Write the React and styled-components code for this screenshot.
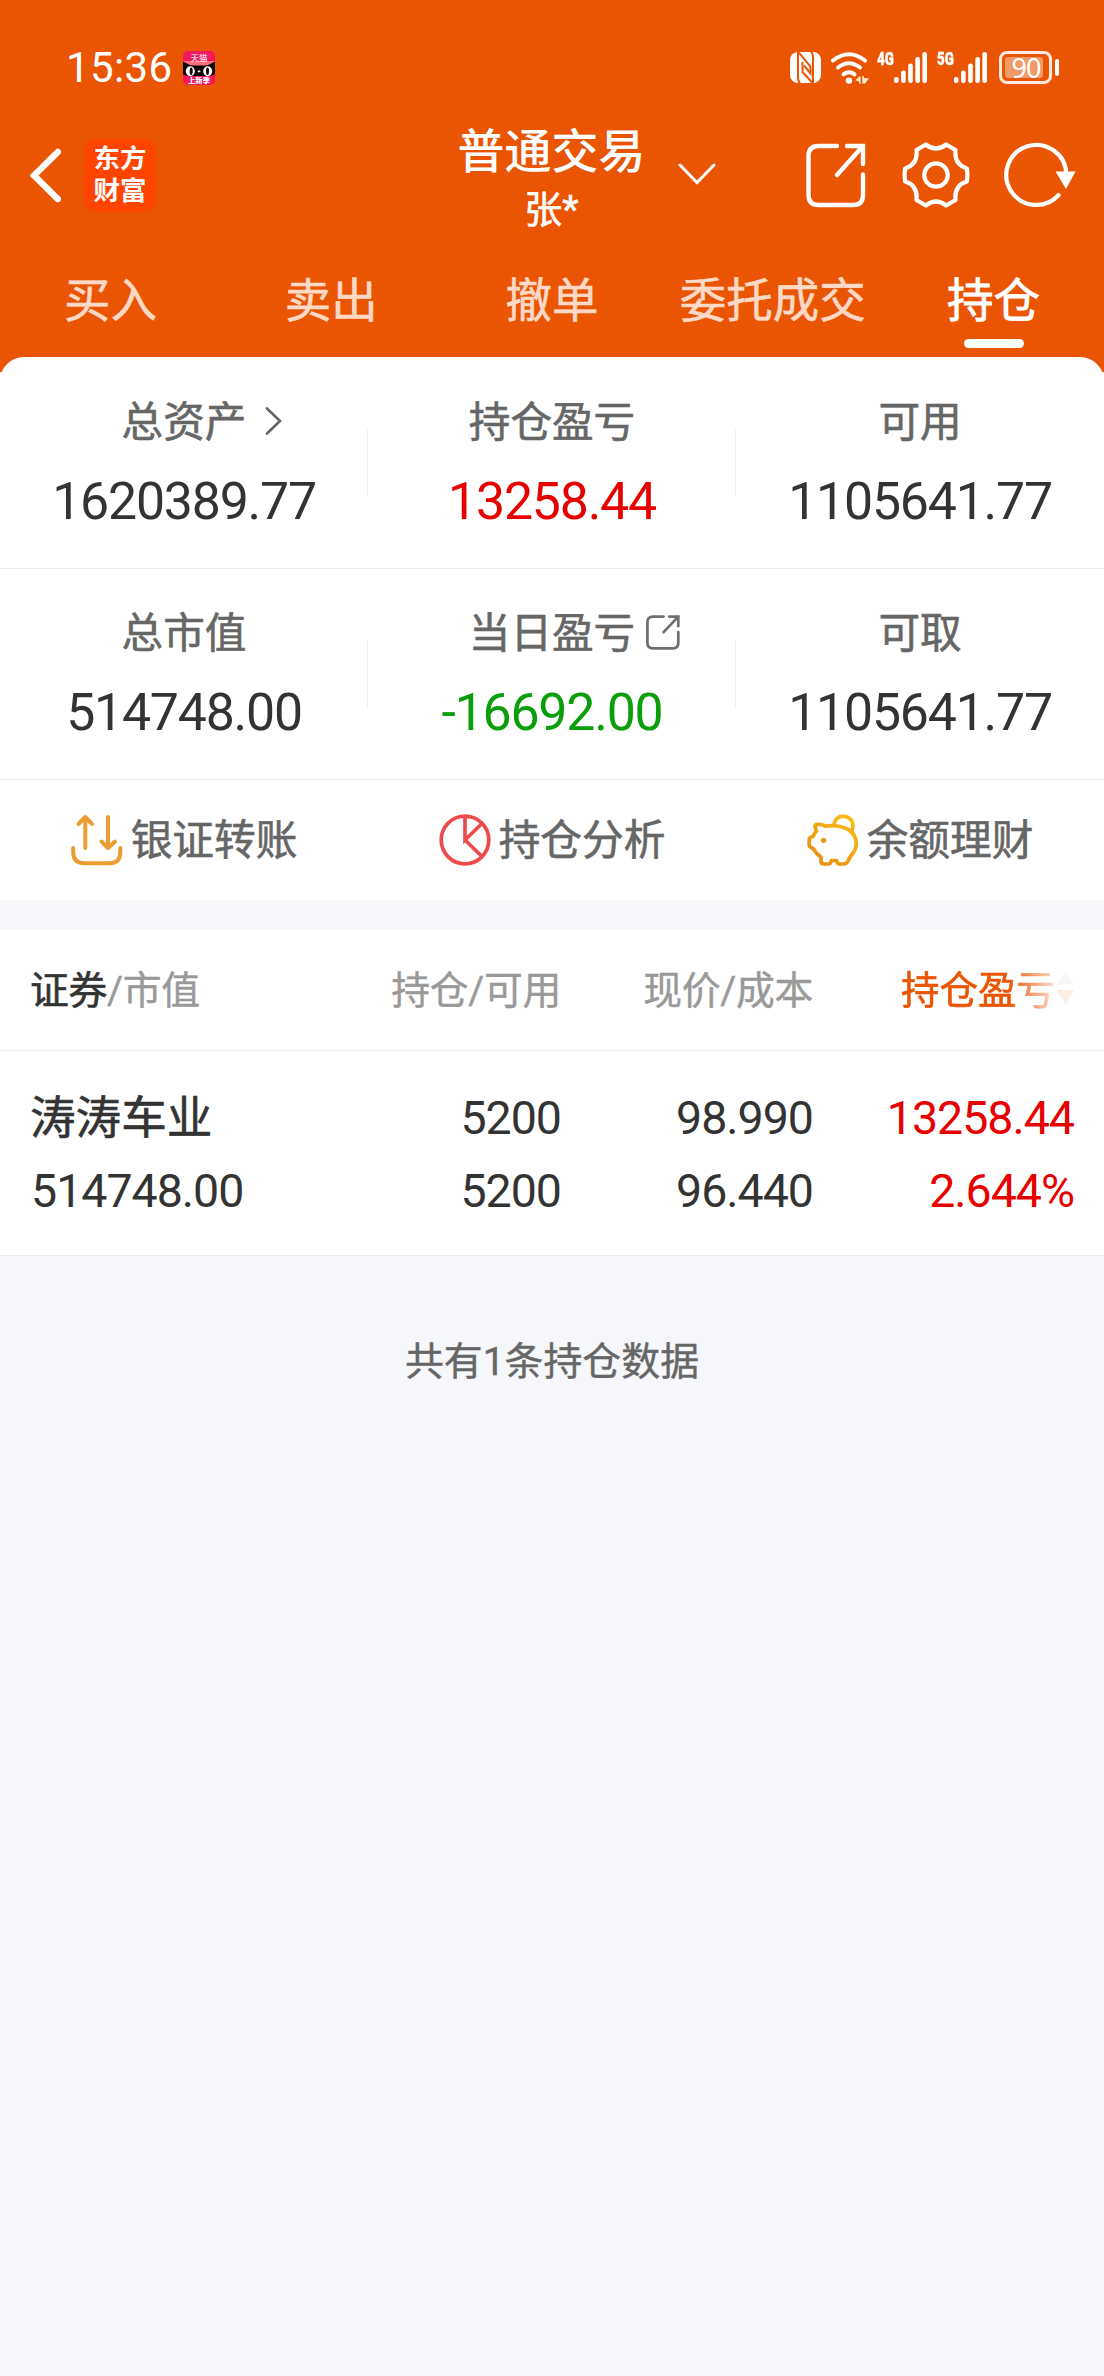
import React from "react";
import styled, { createGlobalStyle } from "styled-components";

const ORANGE = "#ea5504";
const INK = "#333333";
const RED = "#e60000";
const GREEN = "#0a9e0a";
const LINE = "#ededed";
const PAGE = "#f6f7fa";

const GlobalStyle = createGlobalStyle`
  * { box-sizing: border-box; }
  body {
    margin: 0;
    background: ${PAGE};
    font-family: Roboto, "Noto Sans CJK SC", sans-serif;
    color: ${INK};
    -webkit-font-smoothing: antialiased;
  }
  svg { display: block; flex: none; }
`;

const Screen = styled.div`
  width: 1104px;
  min-height: 2376px;
  background: ${PAGE};
`;

const Header = styled.header`
  background: ${ORANGE};
  height: 357px;
  color: #fff;
`;

const StatusBar = styled.div`
  height: 118px;
  padding: 17px 45px 0 66px;
  display: flex;
  align-items: center;
`;

const Clock = styled.span`
  font-size: 42px;
  line-height: 48px;
  letter-spacing: 0.4px;
  margin-right: 10px;
`;

const StatusIcons = styled.div`
  margin-left: auto;
  display: flex;
  align-items: center;
  height: 34px;
`;

const Signal = styled.div`
  display: flex;
  align-items: flex-start;
  height: 31px;
  margin-left: ${(p) => p.$gap}px;
`;

const Generation = styled.span`
  width: 17px;
  font: 900 19px/14px Roboto, sans-serif;
  white-space: nowrap;
`;

const GenerationText = styled.span`
  display: inline-block;
  transform: scaleX(0.7);
  transform-origin: 0 0;
  -webkit-text-stroke: 0.4px currentColor;
`;

const Battery = styled.div`
  display: flex;
  align-items: center;
  gap: 3px;
  margin-left: 11px;
`;

const BatteryBody = styled.div`
  width: 53px;
  height: 33px;
  padding: 3px;
  border: 3px solid #ffe9dc;
  border-radius: 8px;
  display: flex;
`;

const BatteryLevel = styled.div`
  width: 38px;
  border-radius: 3px;
  background: rgba(255, 255, 255, 0.4);
  font: 400 27px/22px "Noto Sans", sans-serif;
  letter-spacing: -1px;
  text-align: center;
  padding-left: 4px;
  white-space: nowrap;
`;

const BatteryTip = styled.div`
  width: 4px;
  height: 17px;
  border-radius: 2px;
  background: #fff;
`;

const TitleBar = styled.div`
  height: 118px;
  padding: 0 28px 0 30px;
  display: grid;
  grid-template-columns: 1fr auto 1fr;
  align-items: start;
`;

const TitleLeft = styled.div`
  display: flex;
  align-items: center;
  gap: 23px;
  padding-top: 21px;
`;

const Brand = styled.div`
  width: 72px;
  height: 73px;
  border-radius: 14px;
  background: #ff4400;
  padding-top: 4px;
  text-align: center;
  font: 700 26.5px/32px "Liberation Sans", "Noto Sans CJK SC", sans-serif;
`;

const TitleCenter = styled.div`
  display: flex;
  align-items: center;
  padding-top: 4px;
`;

const TitleText = styled.div`
  margin: 0 1px 0 -3px;
  text-align: center;
`;

const TitleMain = styled.div`
  font-size: 47px;
  font-weight: 500;
  line-height: 60px;
`;

const TitleSub = styled.div`
  font-size: 38px;
  font-weight: 400;
  line-height: 56px;
  -webkit-text-stroke: 0.6px currentColor;
`;

const ChevronSlot = styled.div`
  margin: -12px -70px 0 31px;
`;

const TitleRight = styled.div`
  display: flex;
  justify-content: flex-end;
  align-items: center;
  padding-top: 24px;
`;

const IconSlot = styled.div`
  margin-left: ${(p) => p.$gap || 0}px;
`;

const Tabs = styled.nav`
  display: grid;
  grid-template-columns: repeat(5, 1fr);
  height: 121px;
`;

const Tab = styled.div`
  display: flex;
  flex-direction: column;
  align-items: center;
  padding-top: 35px;
  font-size: 46.5px;
  line-height: 60px;
  -webkit-text-stroke: ${(p) => (p.$active ? 0.8 : 0.6)}px currentColor;
  color: ${(p) => (p.$active ? "#fff" : "#ffd9c6")};
`;

const TabBar = styled.div`
  width: 60px;
  height: 9px;
  margin-top: 8px;
  border-radius: 5px;
  background: #fff;
`;

const SheetBack = styled.div`
  background: linear-gradient(${ORANGE} 15px, #fff 15px);
`;

const Sheet = styled.section`
  background: #fff;
  border-radius: 24px 24px 0 0;
`;

const StatRow = styled.div`
  display: grid;
  grid-template-columns: repeat(3, 1fr);
  height: ${(p) => p.$height}px;
  padding-top: ${(p) => p.$top}px;
  border-bottom: 1px solid ${LINE};
`;

const Stat = styled.div`
  display: flex;
  flex-direction: column;
  align-items: center;
  background: ${(p) =>
    p.$divided ? `linear-gradient(${LINE}, ${LINE}) 100% 31px / 1px 66px no-repeat` : "none"};
`;

const StatLabel = styled.div`
  display: flex;
  align-items: center;
  height: 48px;
  font-size: 41.6px;
  line-height: 48px;
  color: #666;
  white-space: nowrap;
  -webkit-text-stroke: 0.6px currentColor;
`;

const LabelIcon = styled.span`
  margin-top: -4px;
  margin-left: ${(p) => p.$gap}px;
  margin-right: ${(p) => -p.$gap - p.$width}px;
`;

const StatValue = styled.div`
  margin-top: 25px;
  font-size: 51.8px;
  line-height: 60px;
  letter-spacing: -1.2px;
  color: ${(p) => p.$color || INK};
`;

const Actions = styled.div`
  display: grid;
  grid-template-columns: repeat(3, 1fr);
  height: 120px;
`;

const Action = styled.div`
  display: flex;
  align-items: center;
  justify-content: center;
  gap: 8px;
  color: #666;
`;

const ActionLabel = styled.span`
  padding-top: 2px;
  font-size: 41.7px;
  line-height: 48px;
  -webkit-text-stroke: 0.6px currentColor;
`;

const Holdings = styled.section`
  margin-top: 30px;
  background: #fff;
`;

const HoldingRow = styled.div`
  display: grid;
  grid-template-columns: 282px 250px 252px 261px;
  padding: 0 30px 0 29px;
  border-bottom: 1px solid ${LINE};
`;

const HeadCell = styled.div`
  height: 120px;
  padding: 0 0 7px ${(p) => (p.$left ? 1 : 0)}px;
  display: flex;
  align-items: center;
  justify-content: ${(p) => (p.$left ? "flex-start" : "flex-end")};
  font-size: 38.8px;
  letter-spacing: -0.3px;
  color: ${(p) => p.$color || "#999"};
  white-space: nowrap;
  -webkit-text-stroke: 0.4px currentColor;
`;

const Strong = styled.span`
  color: ${INK};
  -webkit-text-stroke: 0.6px currentColor;
`;

const Faded = styled.div`
  display: flex;
  align-items: center;
  gap: 2px;
  font-size: 38.5px;
  letter-spacing: 0;
  -webkit-text-stroke: 0.6px currentColor;
  mask-image: linear-gradient(90deg, #000 62%, rgba(0, 0, 0, 0.28) 86%, rgba(0, 0, 0, 0.1) 93%);
`;

const Cell = styled.div`
  height: 204px;
  padding-top: 31px;
  text-align: ${(p) => (p.$left ? "left" : "right")};
  font-size: 46.5px;
  line-height: 73px;
  letter-spacing: -1px;
  color: ${(p) => p.$color || INK};
`;

const CellLine = styled.div`
  height: 73px;
  padding-left: 2px;
  white-space: nowrap;
`;

const StockName = styled(CellLine)`
  padding: 0 0 0 1px;
  font-size: 45.6px;
  letter-spacing: 0;
  -webkit-text-stroke: 0.6px currentColor;
`;

const Footer = styled.div`
  padding-top: 77px;
  text-align: center;
  font-size: 38.9px;
  line-height: 58px;
  color: #666;
  -webkit-text-stroke: 0.4px currentColor;
`;

function CatAppIcon() {
  return (
    <svg width="32" height="34" viewBox="0 0 32 34">
      <rect width="32" height="34" rx="5" fill="#f5175c" />
      <rect y="10" width="32" height="6" fill="#ff6f78" />
      <path d="M0 10.5 L4 12.5 Q7 14.5 10 14.5 H22 Q25 14.5 28 12.5 L32 10.5 V23 Q30 25 26 25 H6 Q2 25 0 23Z" fill="#0b0508" />
      <ellipse cx="7.3" cy="20.2" rx="4.5" ry="5" fill="#fff" />
      <ellipse cx="24.7" cy="20.2" rx="4.5" ry="5" fill="#fff" />
      <ellipse cx="8.2" cy="20.2" rx="1.5" ry="3.7" fill="#0b0508" />
      <ellipse cx="24.5" cy="20.2" rx="1.5" ry="3.7" fill="#0b0508" />
      <rect x="14.6" y="19.6" width="2.8" height="1.6" rx="0.8" fill="#fff" />
      <text x="16" y="9.8" textAnchor="middle" fontSize="8.5" fontWeight="500" fill="#ffd7e2">天猫</text>
      <text x="16" y="32.3" textAnchor="middle" fontSize="7.3" fontWeight="900" fill="#fff">上新季</text>
    </svg>
  );
}

function NfcIcon() {
  return (
    <svg width="31" height="31" viewBox="0 0 31 31">
      <rect width="31" height="31" rx="8" fill="#fff" />
      <g fill="none" stroke={ORANGE} strokeWidth="2">
        <path d="M7.5 -1 L20.5 14.5 V21.5 L14 13.5" />
        <path d="M8 0 V25 Q8 29.5 10 31.5" />
        <path d="M23.5 32 L12.5 20 V10" />
        <path d="M23 31 V6 Q23 1.5 21 -0.5" />
      </g>
    </svg>
  );
}

function WifiIcon() {
  return (
    <svg width="38" height="32" viewBox="0 0 38 32">
      <g fill="none" stroke="#fff" strokeWidth="4" strokeLinecap="round">
        <path d="M2 8.5 Q18 -4 34 8.5" />
        <path d="M7 15.5 Q18 7 29 15.5" />
        <path d="M12.5 22.3 Q18 18.3 23.5 22.3" />
      </g>
      <circle cx="18" cy="28.6" r="3.2" fill="#fff" />
      <path d="M24.5 28.3 L28 24.5 H29.6 V32 H28.4 V29.8Z M31.2 24 H32.6 L33 26 L38 26.5 L34 31.5 H31.2Z" fill="#ffe9c9" />
    </svg>
  );
}

function SignalBars() {
  const heights = [6, 12.5, 19.5, 26, 31];
  return (
    <svg width="34" height="31" viewBox="0 0 34 31">
      {heights.map((h, i) => (
        <rect key={h} x={i * 7.1} y={31 - h} width="4.6" height={h} rx="2.1" fill="#fff" />
      ))}
    </svg>
  );
}

function BackIcon() {
  return (
    <svg width="31" height="56" viewBox="0 0 31 56" fill="none" stroke="#fff" strokeWidth="6.5">
      <path d="M27.8 4 L4 27.5 L27.8 51" strokeLinecap="round" />
    </svg>
  );
}

function ChevronDown() {
  return (
    <svg width="38" height="22" viewBox="0 0 38 22" fill="none" stroke="#fff" strokeWidth="3">
      <path d="M2 2 L19 19.5 L36 2" strokeLinecap="round" />
    </svg>
  );
}

function ChevronRight() {
  return (
    <svg width="17" height="28" viewBox="0 0 17 28" fill="none" stroke="#666" strokeWidth="2.6">
      <path d="M2 1.5 L15 14 L2 26.5" strokeLinecap="round" />
    </svg>
  );
}

function ShareIcon({ width, height, color, stroke }) {
  return (
    <svg width={width} height={height} viewBox="0 0 60 65" preserveAspectRatio="none" fill="none" stroke={color} strokeWidth={stroke} strokeLinecap="round">
      <path d="M31 3 H12.5 Q2.5 3 2.5 13 V52 Q2.5 62 12.5 62 H47.5 Q57 62 57 52 V31.5" />
      <path d="M41 3 H57 V21" />
      <path d="M56.5 3.5 L31 32" />
    </svg>
  );
}

function GearIcon() {
  return (
    <svg width="68" height="66" viewBox="0 0 68 66" fill="none" stroke="#fff" strokeWidth="4.2" strokeLinejoin="round">
      <path d="M23.8 2.5 Q34 10.5 44.2 2.5 L53.5 8 Q52 22.5 64.8 26.5 Q66 33 64.8 39.5 Q52 43.5 53.5 58 L44.2 63.5 Q34 55.5 23.8 63.5 L14.5 58 Q16 43.5 3.2 39.5 Q2 33 3.2 26.5 Q16 22.5 14.5 8 Z" />
      <circle cx="34" cy="33" r="11.7" />
    </svg>
  );
}

function RefreshIcon() {
  return (
    <svg width="72" height="66" viewBox="0 0 72 66">
      <path d="M54.6 53 A30 30 0 1 1 62.3 32" fill="none" stroke="#fff" strokeWidth="4.2" strokeLinecap="round" />
      <path d="M51.5 29.5 H71.5 L62 47Z" fill="#fff" />
    </svg>
  );
}

function TransferIcon() {
  return (
    <svg width="52" height="52" viewBox="0 0 52 52" fill="none" stroke="#eb9c33" strokeWidth="4" strokeLinecap="round" strokeLinejoin="round">
      <path d="M2.2 34 V38 Q2.2 49.2 13 49.2 H39 Q49.3 49.2 49.3 38 V34" />
      <path d="M14.3 34 V3 M7.5 10 L14.3 3 L21 10" />
      <path d="M37 3 V34 M30.5 27.5 L37 34 L44 27.5" />
    </svg>
  );
}

function PieIcon() {
  return (
    <svg width="52" height="52" viewBox="0 0 52 52" fill="none" stroke="#ee4b4b" strokeWidth="3.7">
      <circle cx="26" cy="26" r="23.8" />
      <path d="M26 2 V26 L43 9.5 M26 26 L43 42.5" />
    </svg>
  );
}

function PiggyIcon() {
  return (
    <svg width="52" height="52" viewBox="0 0 52 52" fill="none" stroke="url(#pig)" strokeWidth="3.7" strokeLinejoin="round" strokeLinecap="round">
      <defs>
        <linearGradient id="pig" gradientUnits="userSpaceOnUse" x1="10" y1="50" x2="42" y2="0">
          <stop offset="0" stopColor="#ea8d12" />
          <stop offset="1" stopColor="#f8bd17" />
        </linearGradient>
      </defs>
      <path d="M18.5 12.2 Q15 10 9 10.6 Q7.5 11 8.2 13.5 L9.5 17 Q7 19.5 6.4 22.2 L3.2 23.5 Q2.2 24 2.2 26 V31 Q2.2 32.8 4 33.4 L6.5 34.8 Q9 40 14 43 V47 Q14 50 17 50 H21.5 Q23.5 50 24.5 46.5 H29.5 Q30.5 50 32.5 50 H36.5 Q39.5 50 41 47 L44 41.5 Q49.5 36 49.3 28.5 Q48 17 36 13.2 Q27 10.8 18.5 12.2 Z" />
      <path d="M26.5 11.5 Q28.5 2.5 36 2.2 Q45.5 3 46 12 Q46 15 44.5 17.5" />
      <circle cx="16.5" cy="26.3" r="2.6" fill="#ee9714" stroke="none" />
    </svg>
  );
}

function SortIcon() {
  return (
    <svg width="17" height="36" viewBox="0 0 17 36">
      <path d="M8.5 1 L17 15.5 H0Z" fill="#bbb" />
      <path d="M8.5 35.5 L0 21 H17Z" fill={ORANGE} />
    </svg>
  );
}

const tabs = ["买入", "卖出", "撤单", "委托成交", "持仓"];

const stats = [
  [
    { label: "总资产", value: "1620389.77", gap: 19, width: 17, icon: <ChevronRight /> },
    { label: "持仓盈亏", value: "13258.44", color: RED },
    { label: "可用", value: "1105641.77" },
  ],
  [
    { label: "总市值", value: "514748.00" },
    {
      label: "当日盈亏",
      value: "-16692.00",
      color: GREEN,
      gap: 11,
      width: 34,
      icon: <ShareIcon width={34} height={35} color="#707070" stroke={4.8} />,
    },
    { label: "可取", value: "1105641.77" },
  ],
];

const actions = [
  { label: "银证转账", icon: <TransferIcon /> },
  { label: "持仓分析", icon: <PieIcon /> },
  { label: "余额理财", icon: <PiggyIcon /> },
];

function NetworkSignal({ name, gap }) {
  return (
    <Signal $gap={gap}>
      <Generation>
        <GenerationText>{name}</GenerationText>
      </Generation>
      <SignalBars />
    </Signal>
  );
}

export default function App() {
  return (
    <Screen>
      <GlobalStyle />
      <Header>
        <StatusBar>
          <Clock>15:36</Clock>
          <CatAppIcon />
          <StatusIcons>
            <NfcIcon />
            <IconSlot $gap={10}>
              <WifiIcon />
            </IconSlot>
            <NetworkSignal name="4G" gap={8} />
            <NetworkSignal name="5G" gap={9} />
            <Battery>
              <BatteryBody>
                <BatteryLevel>90</BatteryLevel>
              </BatteryBody>
              <BatteryTip />
            </Battery>
          </StatusIcons>
        </StatusBar>
        <TitleBar>
          <TitleLeft>
            <BackIcon />
            <Brand>
              东方
              <br />
              财富
            </Brand>
          </TitleLeft>
          <TitleCenter>
            <TitleText>
              <TitleMain>普通交易</TitleMain>
              <TitleSub>张*</TitleSub>
            </TitleText>
            <ChevronSlot>
              <ChevronDown />
            </ChevronSlot>
          </TitleCenter>
          <TitleRight>
            <ShareIcon width={60} height={65} color="#fff" stroke={4.4} />
            <IconSlot $gap={36}>
              <GearIcon />
            </IconSlot>
            <IconSlot $gap={34}>
              <RefreshIcon />
            </IconSlot>
          </TitleRight>
        </TitleBar>
        <Tabs>
          {tabs.map((name) => (
            <Tab key={name} $active={name === "持仓"}>
              {name}
              {name === "持仓" && <TabBar />}
            </Tab>
          ))}
        </Tabs>
      </Header>

      <SheetBack>
        <Sheet>
          {stats.map((row, r) => (
            <StatRow key={r} $height={r === 0 ? 212 : 211} $top={r === 0 ? 42 : 41}>
              {row.map((s, i) => (
                <Stat key={s.label} $divided={i < 2}>
                  <StatLabel>
                    {s.label}
                    {s.icon && (
                      <LabelIcon $gap={s.gap} $width={s.width}>
                        {s.icon}
                      </LabelIcon>
                    )}
                  </StatLabel>
                  <StatValue $color={s.color}>{s.value}</StatValue>
                </Stat>
              ))}
            </StatRow>
          ))}
          <Actions>
            {actions.map((a) => (
              <Action key={a.label}>
                {a.icon}
                <ActionLabel>{a.label}</ActionLabel>
              </Action>
            ))}
          </Actions>
        </Sheet>
      </SheetBack>

      <Holdings>
        <HoldingRow>
          <HeadCell $left>
            <Strong>证券</Strong>/市值
          </HeadCell>
          <HeadCell>持仓/可用</HeadCell>
          <HeadCell>现价/成本</HeadCell>
          <HeadCell $color={ORANGE}>
            <Faded>
              持仓盈亏
              <SortIcon />
            </Faded>
          </HeadCell>
        </HoldingRow>
        <HoldingRow>
          <Cell $left>
            <StockName>涛涛车业</StockName>
            <CellLine>514748.00</CellLine>
          </Cell>
          <Cell>
            <CellLine>5200</CellLine>
            <CellLine>5200</CellLine>
          </Cell>
          <Cell>
            <CellLine>98.990</CellLine>
            <CellLine>96.440</CellLine>
          </Cell>
          <Cell $color={RED}>
            <CellLine>13258.44</CellLine>
            <CellLine>2.644%</CellLine>
          </Cell>
        </HoldingRow>
      </Holdings>
      <Footer>共有1条持仓数据</Footer>
    </Screen>
  );
}
